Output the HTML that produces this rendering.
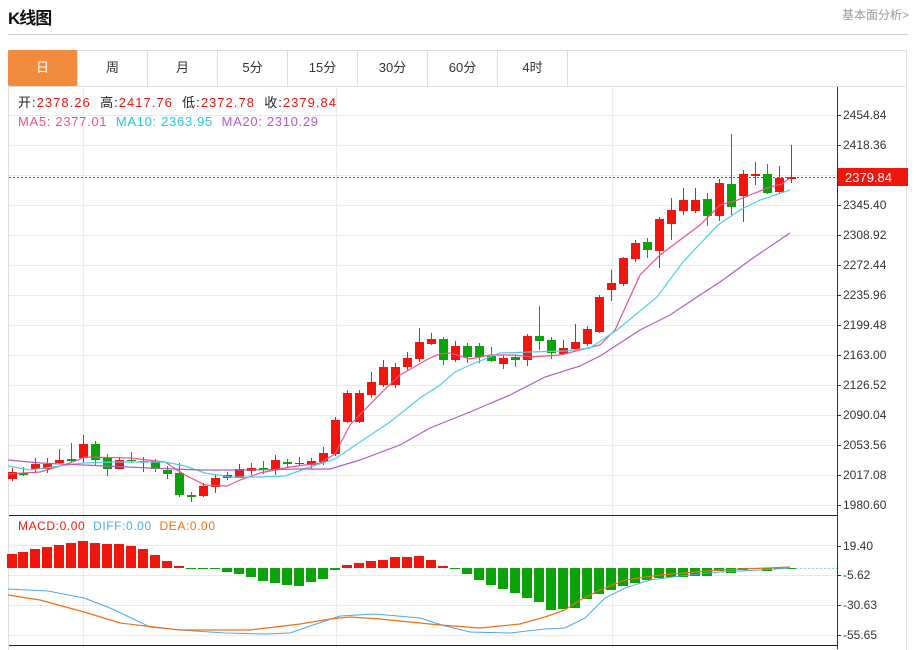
<!DOCTYPE html>
<html><head><meta charset="utf-8"><style>
body{margin:0;width:917px;height:649px;background:#fff;font-family:"Liberation Sans","Noto Sans CJK SC",sans-serif;overflow:hidden;position:relative}
.t{position:absolute;left:8px;top:4px;font-size:17px;font-weight:bold;color:#111;letter-spacing:-1px}
.r{position:absolute;right:8px;top:6px;font-size:12px;color:#999}
.hl{position:absolute;left:8px;top:34px;width:900px;height:1px;background:#ccc}
.box{position:absolute;left:8px;top:50px;width:899px;height:600px;border:1px solid #ddd;border-bottom:none;box-sizing:border-box}
.tabs{position:absolute;left:8px;top:50px;height:37px;border-bottom:1px solid #ddd;width:899px;box-sizing:border-box}
.tab{position:absolute;top:0;width:70px;height:36px;line-height:36px;text-align:center;font-size:13px;color:#333;border-right:1px solid #ddd;box-sizing:border-box}
.tab.on{background:#f28c3c;color:#fff;border-radius:2px}
svg{position:absolute;left:0;top:0}
</style></head><body>
<div class="t">K线图</div><div class="r">基本面分析&gt;</div><div class="hl"></div>
<div class="box"></div>
<div class="tabs">
<div class="tab on" style="left:0">日</div><div class="tab" style="left:70px">周</div><div class="tab" style="left:140px">月</div><div class="tab" style="left:210px">5分</div><div class="tab" style="left:280px">15分</div><div class="tab" style="left:350px">30分</div><div class="tab" style="left:420px">60分</div><div class="tab" style="left:490px">4时</div>
</div>
<svg id="s" width="917" height="649" xmlns="http://www.w3.org/2000/svg" font-family="Liberation Sans, Noto Sans CJK SC, sans-serif" font-size="12"></svg>
<script>
var s='';
[115,145,175,205,235,265,295,325,355,385,415,445,475,505].forEach(function(y){s+='<line x1="9" x2="837" y1="'+(y+.5)+'" y2="'+(y+.5)+'" stroke="#e6ebf0"/>';});
[545,575,605,635].forEach(function(y){s+='<line x1="9" x2="837" y1="'+(y+.5)+'" y2="'+(y+.5)+'" stroke="#e6ebf0"/>';});
[83,336,612].forEach(function(x){s+='<line x1="'+(x+.5)+'" x2="'+(x+.5)+'" y1="88" y2="649" stroke="#e6ebf0"/>';});
s+='<line x1="837.5" x2="837.5" y1="87" y2="649" stroke="#333"/>';
s+='<line x1="9" x2="837" y1="515.5" y2="515.5" stroke="#222"/><line x1="9" x2="837" y1="645.5" y2="645.5" stroke="#222"/>';
var lab=[[115,'2454.84'],[145,'2418.36'],[205,'2345.40'],[235,'2308.92'],[265,'2272.44'],[295,'2235.96'],[325,'2199.48'],[355,'2163.00'],[385,'2126.52'],[415,'2090.04'],[445,'2053.56'],[475,'2017.08'],[505,'1980.60'],[546,'19.40'],[575,'-5.62'],[605,'-30.63'],[635,'-55.65']];
lab.forEach(function(l){s+='<line x1="837" x2="841" y1="'+(l[0]+.5)+'" y2="'+(l[0]+.5)+'" stroke="#333"/><text x="843" y="'+(l[0]+4)+'" fill="#333">'+l[1]+'</text>';});
var c=[[12,1,472,479,468,481],[23,0,473,475,467,476],[35,1,464,469,458,473],[47,1,464,469,458,473],[59,1,460,463,449,464],[71,0,459,461,443,463],[83,1,444,458,435,463],[95,0,444,460,441,466],[107,0,457,469,454,476],[119,1,460,469,457,469],[131,0,460,461,452,463],[143,1,461,462,457,472],[155,0,461,469,459,472],[167,0,470,474,466,479],[179,0,473,495,463,497],[191,0,495,497,492,502],[203,1,486,496,483,497],[215,1,478,487,474,493],[227,1,475,478,472,480],[239,1,469,478,464,478],[251,1,468,471,463,475],[263,0,468,470,461,474],[275,1,460,469,455,475],[287,0,462,464,459,467],[299,1,463,464,457,465],[311,1,461,465,458,469],[323,1,453,462,447,465],[335,1,420,454,417,456],[347,1,393,422,390,423],[359,1,393,422,390,423],[371,1,382,395,372,398],[383,1,367,385,360,387],[395,1,367,385,363,388],[407,1,358,367,352,370],[419,1,342,359,328,362],[431,1,339,344,333,345],[443,0,339,360,337,365],[455,1,346,360,341,362],[467,0,346,357,343,363],[479,0,346,357,343,363],[491,0,356,361,347,362],[503,1,358,364,355,369],[515,0,357,360,355,367],[527,1,336,360,334,366],[539,0,336,341,306,350],[551,0,340,353,337,359],[563,1,348,354,340,355],[575,1,342,349,324,350],[587,1,329,344,326,346],[599,1,297,332,295,333],[611,1,283,290,270,301],[623,1,258,284,257,286],[635,1,243,259,240,262],[647,0,242,250,238,258],[659,1,219,251,217,268],[671,1,210,224,198,240],[683,1,200,211,188,215],[695,1,200,211,188,213],[707,0,199,216,193,226],[719,1,183,216,179,221],[731,0,184,207,134,215],[743,1,174,196,170,222],[755,1,174,176,162,185],[767,0,174,193,164,194],[779,1,178,192,166,193],[791,1,177,179,145,183]];
c.forEach(function(k){var col=k[1]?'#f0160b':'#0aa30a';s+='<line x1="'+(k[0]+.5)+'" x2="'+(k[0]+.5)+'" y1="'+k[4]+'" y2="'+k[5]+'" stroke="'+col+'"/><rect x="'+(k[0]-4)+'" y="'+k[2]+'" width="9" height="'+Math.max(1,k[3]-k[2])+'" fill="'+col+'"/>';});
function pl(p,col,w){s+='<polyline fill="none" stroke="'+col+'" stroke-width="'+(w||1.2)+'" points="'+p.map(function(a){return a.join(',')}).join(' ')+'"/>';}
pl([[8,474],[40,472],[70,463],[85,457],[130,458],[165,462],[185,475],[205,485],[227,486],[240,480],[260,473],[290,467],[320,463],[335,454],[350,425],[383,391],[400,375],[430,358],[440,354],[450,353],[470,359],[490,355],[515,355],[530,357],[560,355],[580,350],[600,345],[615,330],[640,275],[660,255],[680,240],[700,225],[720,205],[735,201],[750,195],[770,187],[782,184],[791,177]],'#f0508a');
pl([[8,466],[30,470],[60,466],[83,463],[115,462],[165,462],[185,466],[205,473],[230,477],[260,477],[285,476],[310,467],[335,459],[360,442],[390,422],[420,398],[440,385],[455,372],[470,365],[500,353],[530,352],[565,351],[590,348],[617,330],[657,297],[683,262],[697,247],[718,225],[740,210],[760,200],[790,190]],'#4dd0e1');
pl([[8,460],[40,463],[83,465],[150,468],[200,470],[250,470],[300,469],[330,469],[360,460],[400,445],[430,428],[470,412],[510,395],[545,377],[580,366],[600,356],[640,330],[670,315],[700,295],[720,282],[753,258],[790,233]],'#b05cc8');
s+='<line x1="9" x2="837" y1="177.5" y2="177.5" stroke="#f0160b" stroke-dasharray="2,2"/><rect x="838" y="168" width="70" height="18" fill="#f0160b"/><text x="845" y="182" fill="#fff" font-size="13">2379.84</text>';
s+='<line x1="796" x2="837" y1="568.5" y2="568.5" stroke="#8fd3f0" stroke-dasharray="2,2"/>';
var m=[[12,554],[23,552],[35,549],[47,547],[59,545],[71,543],[83,541],[95,543],[107,544],[119,544],[131,546],[143,549],[155,555],[167,561],[179,566],[191,568],[203,568],[215,569],[227,572],[239,574],[251,577],[263,581],[275,583],[287,585],[299,586],[311,582],[323,579],[335,570],[347,565],[359,563],[371,561],[383,560],[395,557],[407,557],[419,556],[431,560],[443,566],[455,568],[467,574],[479,580],[491,585],[503,589],[515,593],[527,598],[539,602],[551,610],[563,609],[575,608],[587,599],[599,594],[611,590],[623,586],[635,583],[647,580],[659,578],[671,577],[683,577],[695,576],[707,576],[719,571],[731,573],[743,570],[755,569],[767,571],[779,569],[791,568]];
m.forEach(function(b){var y0=568,col=b[1]<y0?'#f0160b':'#0aa30a';var t=Math.min(b[1],y0),h=Math.max(1,Math.abs(b[1]-y0));s+='<rect x="'+(b[0]-5)+'" y="'+t+'" width="10" height="'+h+'" fill="'+col+'"/>';});
pl([[8,589],[48,591],[84,598],[110,608],[125,615],[150,627],[180,630],[225,633],[265,634],[290,633],[310,626],[340,616],[375,614],[420,618],[445,626],[470,632],[510,633],[545,629],[565,628],[585,618],[605,598],[625,588],[650,580],[680,576],[720,572],[760,570],[790,568]],'#4aa8f0',1);
pl([[8,595],[40,600],[84,612],[120,623],[180,630],[250,630],[300,624],[330,619],[350,617],[380,619],[440,625],[480,628],[520,624],[545,617],[565,610],[580,600],[600,590],[625,580],[660,575],[720,570],[790,567]],'#f07010',1.2);
s+='<text x="18" y="107" font-size="13" fill="#222" xml:space="preserve" textLength="318" lengthAdjust="spacing">开:<tspan fill="#f0160b">2378.26</tspan>  高:<tspan fill="#f0160b">2417.76</tspan>  低:<tspan fill="#f0160b">2372.78</tspan>  收:<tspan fill="#f0160b">2379.84</tspan></text>';
s+='<text x="18" y="126" font-size="13" xml:space="preserve" textLength="300" lengthAdjust="spacing"><tspan fill="#f0508a">MA5: 2377.01</tspan>  <tspan fill="#29c3d8">MA10: 2363.95</tspan>  <tspan fill="#b05cc8">MA20: 2310.29</tspan></text>';
s+='<text x="18" y="530" xml:space="preserve" textLength="197" lengthAdjust="spacing"><tspan fill="#f0160b">MACD:0.00</tspan>  <tspan fill="#4aa8f0">DIFF:0.00</tspan>  <tspan fill="#f07010">DEA:0.00</tspan></text>';
document.getElementById('s').innerHTML=s;
</script>
</body></html>
